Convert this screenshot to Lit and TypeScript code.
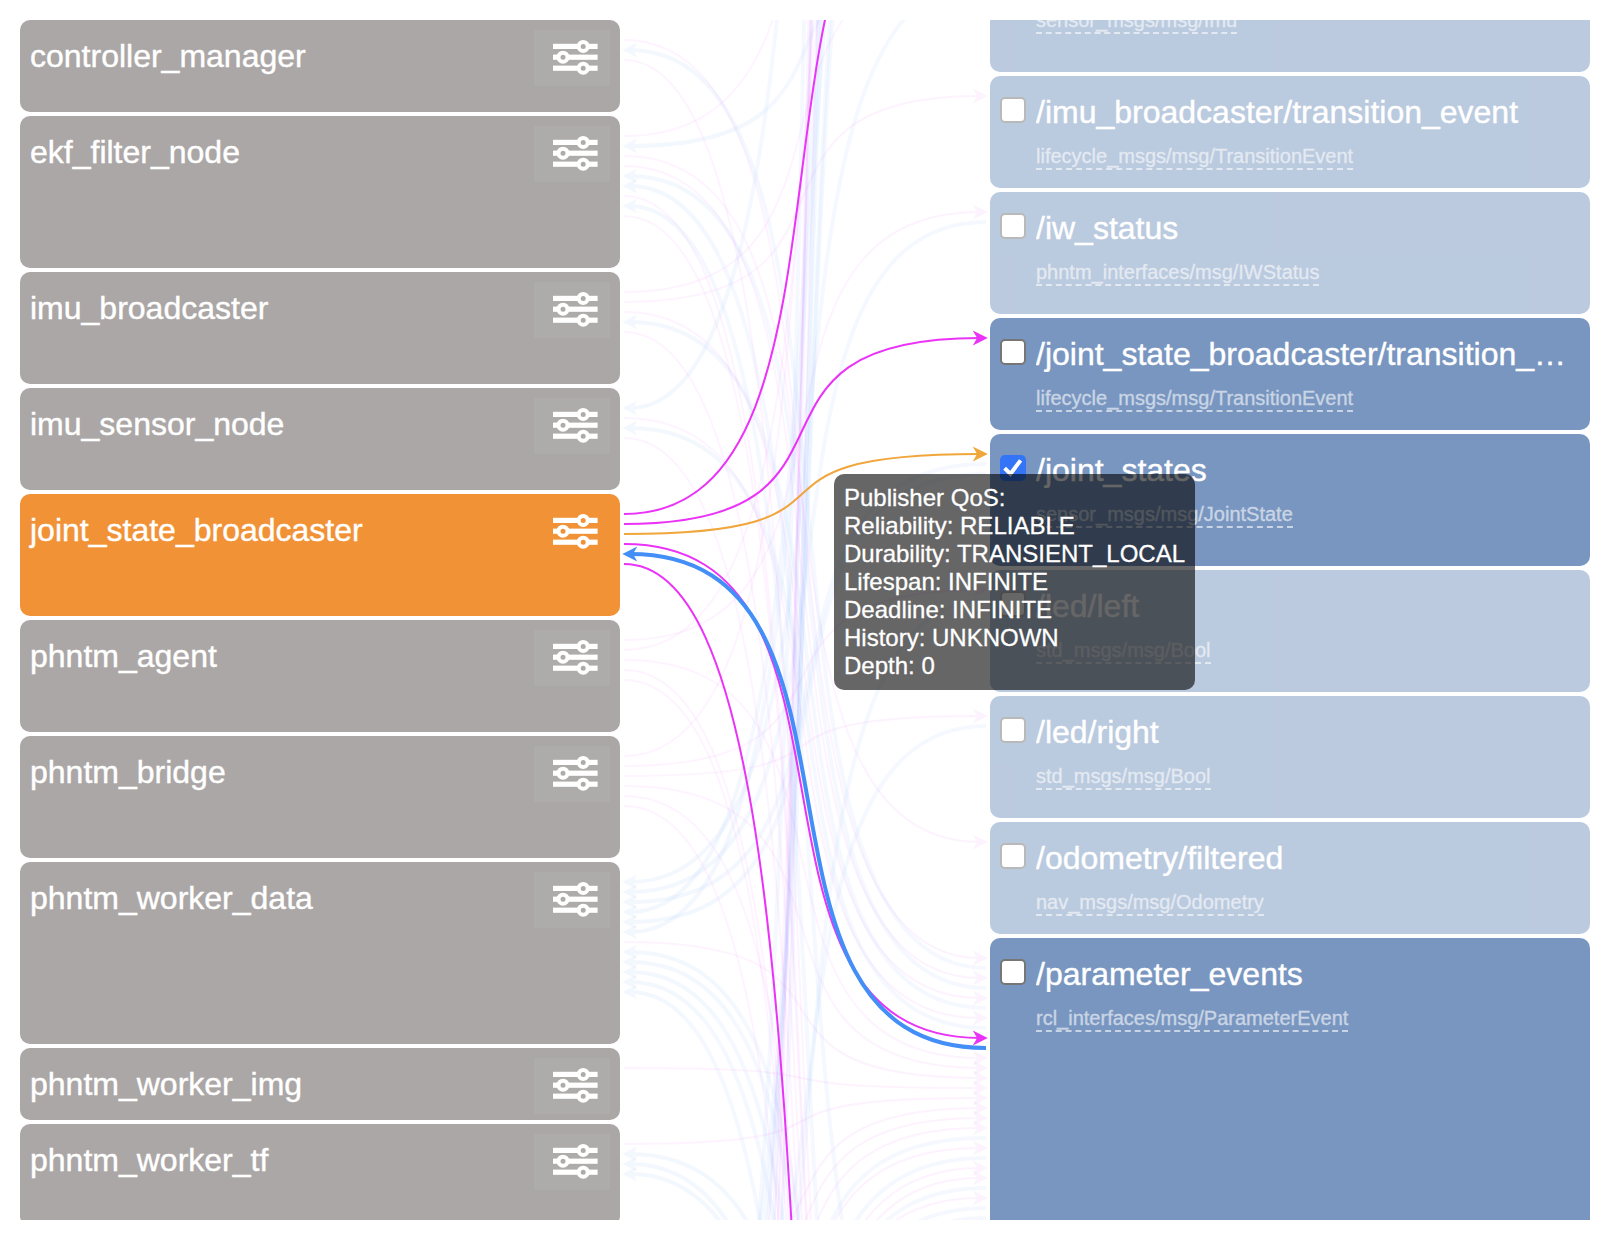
import { LitElement, html, svg, css, nothing } from "lit";
import { customElement, property } from "lit/decorators.js";
import { classMap } from "lit/directives/class-map.js";
import { styleMap } from "lit/directives/style-map.js";

type Kind = "out" | "in" | "active";
type Edge = [kind: Kind, nodeY: number, topicY: number];

interface NodeItem {
  name: string;
  ports: number;
  selected?: boolean;
}

interface TopicItem {
  name: string;
  type: string;
  ports: number;
  linked?: boolean;
  checked?: boolean;
}

const NODES: NodeItem[] = [
  { name: "controller_manager", ports: 3 },
  { name: "ekf_filter_node", ports: 9 },
  { name: "imu_broadcaster", ports: 5 },
  { name: "imu_sensor_node", ports: 4 },
  { name: "joint_state_broadcaster", ports: 6, selected: true },
  { name: "phntm_agent", ports: 5 },
  { name: "phntm_bridge", ports: 6 },
  { name: "phntm_worker_data", ports: 12 },
  { name: "phntm_worker_img", ports: 1 },
  { name: "phntm_worker_tf", ports: 4 },
];

const TOPICS: TopicItem[] = [
  { name: "/imu/data", type: "sensor_msgs/msg/Imu", ports: 3 },
  { name: "/imu_broadcaster/transition_event", type: "lifecycle_msgs/msg/TransitionEvent", ports: 1 },
  { name: "/iw_status", type: "phntm_interfaces/msg/IWStatus", ports: 2 },
  { name: "/joint_state_broadcaster/transition_event", type: "lifecycle_msgs/msg/TransitionEvent", ports: 1, linked: true },
  { name: "/joint_states", type: "sensor_msgs/msg/JointState", ports: 3, linked: true, checked: true },
  { name: "/led/left", type: "std_msgs/msg/Bool", ports: 2 },
  { name: "/led/right", type: "std_msgs/msg/Bool", ports: 2 },
  { name: "/odometry/filtered", type: "nav_msgs/msg/Odometry", ports: 1 },
  { name: "/parameter_events", type: "rcl_interfaces/msg/ParameterEvent", ports: 36, linked: true },
];

const QOS = [
  "Publisher QoS:",
  "Reliability: RELIABLE",
  "Durability: TRANSIENT_LOCAL",
  "Lifespan: INFINITE",
  "Deadline: INFINITE",
  "History: UNKNOWN",
  "Depth: 0",
];

const FAINT: Edge[] = [
  ["out", 40, 958], ["in", 50, 968], ["out", 60, 2000],
  ["out", 136, -350], ["in", 146, -60], ["out", 156, 842], ["out", 166, 978],
  ["in", 176, 988], ["in", 186, 1500], ["out", 196, 2040], ["in", 206, 1900], ["out", 216, 2060],
  ["out", 292, -40], ["out", 302, 96], ["out", 312, 998], ["in", 322, 1008], ["out", 332, 2100],
  ["in", 408, -1290], ["out", 418, 1018], ["in", 428, 1028], ["out", 438, 2150],
  ["out", 640, 212], ["out", 650, -300], ["out", 660, 1058], ["out", 670, 2200], ["out", 680, 2280],
  ["out", 756, -420], ["out", 766, 590], ["out", 776, 716], ["out", 786, 1068],
  ["out", 796, 1750], ["out", 806, 2300],
  ["in", 882, -20], ["in", 892, 222], ["in", 902, 464], ["in", 912, -500], ["in", 922, 474], ["in", 932, -420],
  ["out", 942, 1078],
  ["in", 952, 1620], ["in", 962, 1700], ["in", 972, 1900], ["in", 982, 2100], ["in", 992, 2500],
  ["out", 1068, 1088],
  ["out", 1144, 1098], ["in", 1154, 1760], ["in", 1164, 2020], ["in", 1174, 2040],
  ["in", 1450, 726], ["in", 1618, 600],
  ["out", 1290, 1108], ["out", 1340, 1118], ["out", 1400, 1128], ["in", 1440, 1138],
  ["out", 1480, 1148], ["in", 1571, 1158], ["out", 1668, 1168], ["out", 1716, 1178],
  ["in", 1645, 1188], ["out", 1676, 1198], ["in", 1700, 1208], ["in", 1750, 1218],
  ["in", 1540, -540], ["in", 1600, -620], ["in", 1700, -900],
  ["in", 1800, -2100], ["in", 2000, -1700], ["in", 2100, -1300],
  ["out", 2300, -1700], ["out", 2250, -1500], ["out", 2100, -1400],
  ["out", 1900, -1200], ["out", 2200, -1100],
];

const STRONG: Edge[] = [
  ["out", 514, -172],
  ["out", 524, 338],
  ["active", 534, 454],
  ["out", 544, 1038],
  ["out", 564, 2270],
  ["in", 554, 1048],
];

@customElement("sliders-icon")
class SlidersIcon extends LitElement {
  static styles = css`
    :host { display: block; width: 45px; height: 36px; }
    .art { display: block; }
    .bar { fill: #fff; }
    .knob { fill: var(--knob-hole, #aeacab); stroke: #fff; stroke-width: 4; }
  `;
  render() {
    const knobs = [[30.2, 7.4], [10, 18.2], [30.2, 29.2]];
    return html`<svg class="art" width="45" height="36" viewBox="0 0 45 36">
      ${knobs.map(([x, y]) => svg`
        <rect class="bar" x="0" y=${y - 2.6} width="44.6" height="5.2"></rect>
        <circle class="knob" cx=${x} cy=${y} r="4.5"></circle>`)}
    </svg>`;
  }
}

@customElement("node-card")
class NodeCard extends LitElement {
  static styles = css`
    :host { display: block; flex: none; }
    .card {
      display: flex; justify-content: space-between; align-items: flex-start;
      box-sizing: border-box; padding: 10px; border-radius: 10px;
      background: #aba7a6; color: #fff;
    }
    .name {
      font-size: 32px; line-height: 36px; padding-top: 8px; white-space: nowrap;
      -webkit-text-stroke: 0.4px #fff;
    }
    .config {
      display: flex; box-sizing: border-box; width: 76px; height: 56px;
      padding: 9px 0 0 19px; background: #aeacab;
    }
    .selected { background: #f19237; --knob-hole: #f19237; }
    .selected .config { background: transparent; }
  `;
  @property({ attribute: false }) item!: NodeItem;
  render() {
    const { name, ports, selected } = this.item;
    return html`<div class=${classMap({ card: true, selected: !!selected })}
        style=${styleMap({ height: `${62 + ports * 10}px` })}>
      <div class="name">${name}</div>
      <div class="config"><sliders-icon></sliders-icon></div>
    </div>`;
  }
}

@customElement("topic-card")
class TopicCard extends LitElement {
  static styles = css`
    :host { display: block; flex: none; }
    .card {
      display: grid; grid-template-columns: 26px minmax(0, 1fr); column-gap: 10px;
      align-content: start; box-sizing: border-box; padding: 18px 20px 0 10px;
      border-radius: 10px; background: #7896c0; color: #fff; opacity: 0.5;
    }
    .linked { opacity: 1; }
    .box {
      box-sizing: border-box; width: 26px; height: 26px; margin-top: 3px;
      border: 2px solid #767676; border-radius: 5px; background: #fff;
    }
    .checked { border: 0; background: #3375f6; }
    .tick { display: block; fill: none; stroke: #fff; stroke-width: 4; }
    .name {
      font-size: 32px; line-height: 36px; white-space: nowrap;
      overflow: hidden; text-overflow: ellipsis;
      -webkit-text-stroke: 0.4px #fff;
    }
    .type {
      grid-column: 2; justify-self: start; margin-top: 15px;
      font-size: 20px; line-height: 23px; opacity: 0.6; border-bottom: 2px dashed #fff;
      -webkit-text-stroke: 0.3px #fff;
    }
  `;
  @property({ attribute: false }) item!: TopicItem;
  render() {
    const { name, type, ports, linked, checked } = this.item;
    return html`<div class=${classMap({ card: true, linked: !!linked })}
        style=${styleMap({ height: `${102 + ports * 10}px` })}>
      <div class=${classMap({ box: true, checked: !!checked })}>
        ${checked
          ? html`<svg class="tick" width="26" height="26" viewBox="0 0 26 26"><path d="M4.6 13.2 10.4 19 20.6 5.4"></path></svg>`
          : nothing}
      </div>
      <div class="name">${name}</div>
      <div class="type">${type}</div>
    </div>`;
  }
}

@customElement("link-layer")
class LinkLayer extends LitElement {
  static styles = css`
    :host { display: block; height: 1200px; overflow: hidden; }
    .canvas { display: block; }
    .line { fill: none; stroke: currentColor; stroke-width: 2; }
    .head { fill: currentColor; }
    .in .line { stroke-width: 4; }
    .out { color: #ea33f7; }
    .in { color: #438ff7; }
    .active { color: #f0a63a; }
    .out.faint { opacity: 0.055; }
    .in.faint { opacity: 0.055; }
  `;

  private edge([kind, y1, y2]: Edge, faint: boolean) {
    const inbound = kind === "in";
    const x1 = inbound ? 630 : 624;
    const x2 = x1 + 356;
    const reach = 356 * 0.755;
    const d = `M${x1} ${y1}C${x1 + reach} ${y1} ${x2 - reach} ${y2} ${x2} ${y2}`;
    const head = inbound
      ? `M622.3 ${y1}l15 -7.5l-4.3 7.5l4.3 7.5z`
      : `M987.8 ${y2}l-15 -7.5l4.3 7.5l-4.3 7.5z`;
    return svg`<g class=${`${kind} ${faint ? "faint" : ""}`}>
      <path class="line" d=${d}></path><path class="head" d=${head}></path></g>`;
  }

  render() {
    return html`<svg class="canvas" width="370" height="1200" viewBox="620 20 370 1200">
      ${FAINT.map((e) => this.edge(e, true))}
      ${STRONG.map((e) => this.edge(e, false))}
    </svg>`;
  }
}

@customElement("app-root")
class AppRoot extends LitElement {
  static styles = css`
    :host {
      display: block; box-sizing: border-box; width: 1610px; height: 1240px;
      padding: 20px; background: #fff; overflow: hidden;
      font-family: "Liberation Sans", Arial, sans-serif;
    }
    .graph {
      display: grid; grid-template-columns: 600px 370px 600px;
      height: 1200px; overflow: hidden; position: relative;
    }
    .column { display: flex; flex-direction: column; gap: 4px; height: 1200px; }
    .topics { margin-top: -80px; }
    .tooltip {
      position: absolute; left: 814px; top: 454px; box-sizing: border-box;
      width: 361px; padding: 10px; border-radius: 10px;
      background: rgba(0, 0, 0, 0.6); color: #fff;
      font-size: 24px; line-height: 28px; white-space: nowrap;
      -webkit-text-stroke: 0.3px #fff;
    }
  `;
  render() {
    return html`<div class="graph">
      <div class="column">${NODES.map((n) => html`<node-card .item=${n}></node-card>`)}</div>
      <link-layer></link-layer>
      <div class="column topics">${TOPICS.map((t) => html`<topic-card .item=${t}></topic-card>`)}</div>
      <div class="tooltip">${QOS.map((line) => html`<div>${line}</div>`)}</div>
    </div>`;
  }
}
